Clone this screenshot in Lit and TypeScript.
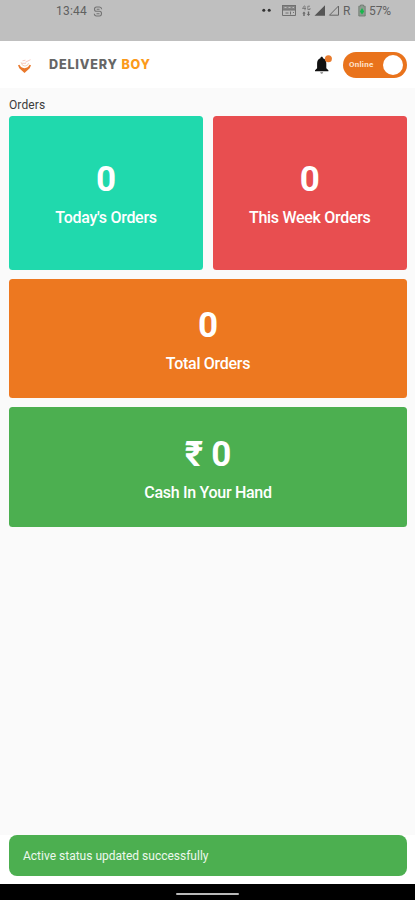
import { LitElement, html, css } from "lit";
import { customElement, property } from "lit/decorators.js";

@customElement("stat-card")
class StatCard extends LitElement {
  @property() value = "0";
  @property() label = "";
  @property({ reflect: true }) tone = "teal";

  static styles = css`
    :host {
      display: flex;
      flex-direction: column;
      align-items: center;
      justify-content: center;
      border-radius: 3.5px;
      color: #fff;
      box-sizing: border-box;
      padding-top: 3px;
    }
    :host([tone="teal"]) { background: #20d9ad; }
    :host([tone="red"]) { background: #e84e50; }
    :host([tone="orange"]) { background: #ed7820; }
    :host([tone="green"]) { background: #4caf50; }
    .value { font-size: 35px; font-weight: 700; line-height: 40px; white-space: pre; letter-spacing: -0.3px; }
    .label { font-size: 16px; font-weight: 500; line-height: 20px; margin-top: 8px; white-space: nowrap; letter-spacing: -0.29px; }
  `;

  render() {
    return html`<div class="value">${this.value}</div><div class="label">${this.label}</div>`;
  }
}

@customElement("app-root")
class AppRoot extends LitElement {
  static styles = css`
    :host {
      display: flex;
      flex-direction: column;
      width: 415px;
      height: 900px;
      overflow: hidden;
      background: #fafafa;
      font-family: Roboto, "Noto Sans", sans-serif;
    }
    .status {
      height: 41px;
      flex: none;
      box-sizing: border-box;
      background: #bfbfbf;
      display: flex;
      align-items: flex-start;
      padding: 4px 24px 0 56px;
      color: #606060;
      font-size: 12px;
      line-height: 15px;
    }
    .time { width: 32px; letter-spacing: 0.2px; }
    .status svg { display: block; flex: none; }
    .app { margin: 2px 0 0 5px; }
    .icons { margin-left: auto; }
    .roam { width: 12px; padding-left: 4px; box-sizing: content-box; }
    .batt { margin-left: 3px; }
    .pct { letter-spacing: -0.1px; margin-left: 3px; }
    .header {
      height: 47px;
      flex: none;
      background: #fff;
      display: flex;
      align-items: center;
      padding: 0 8px 0 17px;
    }
    .brand {
      margin-left: 16px;
      font-family: Inter, sans-serif;
      font-weight: 800;
      font-size: 12.6px;
      letter-spacing: 0.82px;
      color: #666;
      white-space: nowrap;
    }
    .brand .accent { color: #fb9a1c; }
    .bell { margin-left: auto; }
    .toggle {
      width: 64px;
      height: 26px;
      box-sizing: border-box;
      border-radius: 13px;
      background: #e9731c;
      margin: 0 0 0 10px;
      padding: 0 4px 0 6px;
      display: flex;
      align-items: center;
      justify-content: space-between;
      color: #ffe3cd;
      font-size: 8px;
      font-weight: 700;
      letter-spacing: 0.25px;
    }
    .knob { width: 20px; height: 20px; border-radius: 50%; background: #fff; }
    .content { flex: 1; padding: 9px 8px 0 9px; }
    .title { font-size: 12px; line-height: 16px; color: #3c3c3c; height: 19px; letter-spacing: 0.1px; }
    .grid {
      display: grid;
      grid-template-columns: 194px 194.5px;
      grid-template-rows: 153.5px 119.5px 120px;
      gap: 9px 9.5px;
    }
    .wide { grid-column: 1 / -1; }
    .foot { background: #fff; padding: 0 8px 8.5px 9px; flex: none; }
    .toast {
      height: 41px;
      box-sizing: border-box;
      border-radius: 8px;
      background: #4caf50;
      color: #edf8ed;
      font-size: 12px;
      display: flex;
      align-items: center;
      padding: 1px 14px 0;
    }
    .nav {
      height: 16px;
      flex: none;
      background: #000;
      display: flex;
      align-items: center;
      justify-content: center;
    }
    .handle { width: 63px; height: 2px; border-radius: 1px; background: #b9b9b9; margin-top: 4px; }
  `;

  render() {
    return html`
      <div class="status">
        <span class="time">13:44</span>
        <svg class="app" width="10" height="12" viewBox="0 0 10 12" fill="none" stroke="#747474" stroke-width="1.1">
          <path d="M8.7 3.2Q8.4 1 6.5 1H3.5Q1.5 1 1.5 3.2Q1.5 5.3 3.5 5.3H6.5Q8.5 5.3 8.5 7.5Q8.5 10 6.5 10H3.5Q1.5 10 1.3 7.8M3.7 3.2H6.5M3.5 7.7H6.5" />
        </svg>
        <svg class="icons" width="78" height="16" viewBox="0 0 78 16">
          <circle cx="2.8" cy="6.3" r="1.5" fill="#333" />
          <circle cx="8.2" cy="6.3" r="1.5" fill="#333" />
          <g fill="none" stroke="#717171">
            <rect x="21.5" y="1.5" width="13" height="4.5" fill="#858585" />
            <path d="M21.5 6V11.5H34.5V6M24.5 9H27.5M29.5 7.5V10.5M32 8.5H33" />
            <path d="M23.5 3.5H25.5M27.5 3.5H29.5M31.5 3.5H33" stroke="#bdbdbd" />
            <path d="M43.5 1.5L41.5 4.5H45M44 2V6.3M49 2.2H46.8V5.5H49V4" stroke-width=".8" />
          </g>
          <path d="M43 7.5L44.7 9.5H43.7V12H42.3V9.5H41.3ZM47.5 12L45.8 10H46.8V7.5H48.2V10H49.2Z" fill="#666" />
          <path d="M64 1.2V11.7H53.5Z" fill="#555" />
          <path d="M77.5 2V11.2H68.5Z" fill="none" stroke="#666" />
        </svg>
        <span class="roam">R</span>
        <svg class="batt" width="8" height="14" viewBox="0 0 8 14">
          <path d="M2.5 1H5.5V2.2H7.2V12H.8V2.2H2.5Z" fill="#8c9c90" stroke="#6e776f" stroke-width=".8" />
          <path d="M4 4L6.2 7.5L4 10.5L1.8 7.5Z" fill="#18b74c" />
        </svg>
        <span class="pct">57%</span>
      </div>

      <div class="header">
        <svg width="16" height="22" viewBox="0 0 16 22" fill="none">
          <path d="M1 11.2L2.4 10.7L4 13Q7.5 15.3 11 13L12.6 10.7L14 11.2L12.7 14.2L7.5 19L2.3 14.2Z" fill="#e9782b" />
          <path d="M4 8.2L5.5 11.2Q8 13 10.5 11.2L11.5 9.2" stroke="#f5c9ad" stroke-width=".9" />
          <path d="M5.5 6.8L8.5 6.2M8.5 8.2L13.5 5.7M5 9.3H9" stroke="#f6bdb2" stroke-width=".8" />
        </svg>
        <div class="brand">DELIVERY <span class="accent">BOY</span></div>
        <svg class="bell" width="20" height="22" viewBox="0 0 20 22">
          <path d="M8.7 2.8C9.6 2.8 10 3.5 10 4.2C12.4 5 13.3 7 13.3 9.4V14.2L15.4 16.3V17.2H2V16.3L4.1 14.2V9.4C4.1 7 5 5 7.4 4.2C7.4 3.5 7.8 2.8 8.7 2.8Z" fill="#111" />
          <path d="M7.2 18.1H10.2Q10.2 19.8 8.7 20Q7.2 19.8 7.2 18.1Z" fill="#999" />
          <circle cx="15.4" cy="4.8" r="3.5" fill="#e87b2e" />
        </svg>
        <div class="toggle"><span>Online</span><span class="knob"></span></div>
      </div>

      <div class="content">
        <div class="title">Orders</div>
        <div class="grid">
          <stat-card tone="teal" value="0" label="Today's Orders"></stat-card>
          <stat-card tone="red" value="0" label="This Week Orders"></stat-card>
          <stat-card class="wide" tone="orange" value="0" label="Total Orders"></stat-card>
          <stat-card class="wide" tone="green" value="₹ 0" label="Cash In Your Hand"></stat-card>
        </div>
      </div>

      <div class="foot"><div class="toast">Active status updated successfully</div></div>
      <div class="nav"><div class="handle"></div></div>
    `;
  }
}
